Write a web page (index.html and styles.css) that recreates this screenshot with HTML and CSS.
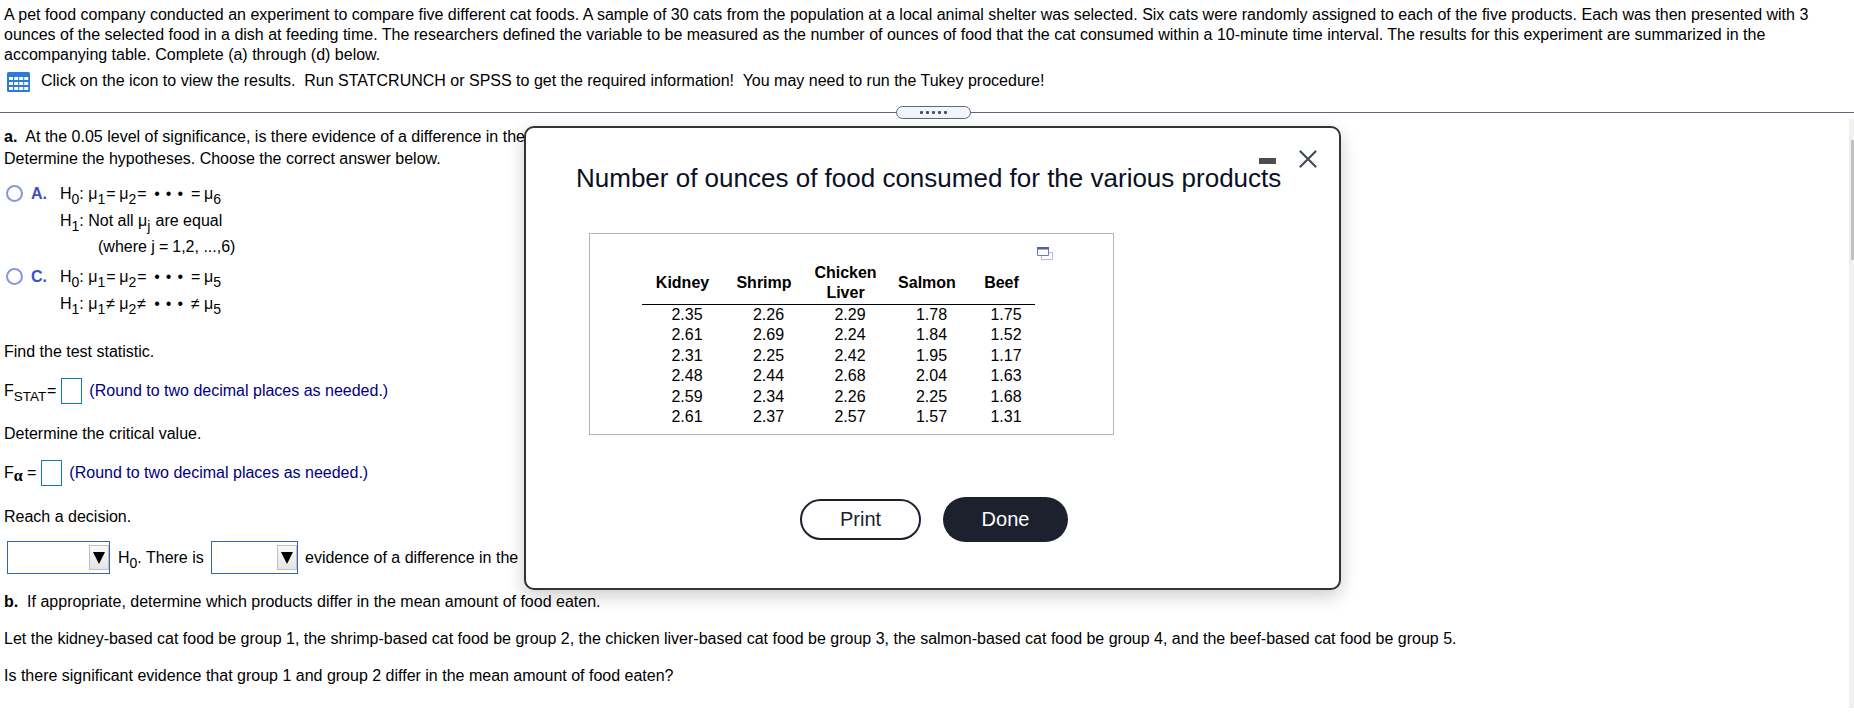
FILE: index.html
```html
<!DOCTYPE html>
<html lang="en">
<head>
  <meta charset="UTF-8">
  <title>Cat food experiment</title>
  <link rel="stylesheet" href="styles.css">
</head>
<body>
  <!-- Problem statement -->
  <div class="intro">
    <p><span class="l1">A pet food company conducted an experiment to compare five different cat foods. A sample of 30 cats from the population at a local animal shelter was selected. Six cats were randomly assigned to each of the five products. Each was then presented with 3</span><br>
    <span class="l2">ounces of the selected food in a dish at feeding time. The researchers defined the variable to be measured as the number of ounces of food that the cat consumed within a 10-minute time interval. The results for this experiment are summarized in the</span><br>
    <span class="l3">accompanying table. Complete (a) through (d) below.</span></p>
    <div class="data-link">
      <svg width="23" height="20" viewBox="0 0 23 20">
        <rect width="23" height="20" rx="1.5" fill="#2a7bd8"/>
        <g fill="#fff">
          <rect x="2" y="5" width="4" height="3"/><rect x="7.2" y="5" width="4" height="3"/><rect x="12.2" y="5" width="4" height="3"/><rect x="17.2" y="5" width="4" height="3"/>
          <rect x="2" y="10" width="4" height="3"/><rect x="7.2" y="10" width="4" height="3"/><rect x="12.2" y="10" width="4" height="3"/><rect x="17.2" y="10" width="4" height="3"/>
          <rect x="2" y="15" width="4" height="3"/><rect x="7.2" y="15" width="4" height="3"/><rect x="12.2" y="15" width="4" height="3"/><rect x="17.2" y="15" width="4" height="3"/>
        </g>
      </svg>
      <span class="l4">Click on the icon to view the results.&nbsp; Run STATCRUNCH or SPSS to get the required information!&nbsp; You may need to run the Tukey procedure!</span>
    </div>
  </div>

  <div class="splitter">
    <div class="handle"><i></i><i></i><i></i><i></i><i></i></div>
  </div>

  <!-- Question parts -->
  <div class="question">
    <p class="part-a"><span class="l5"><b>a.</b>&nbsp; At the 0.05 level of significance, is there evidence of a difference in the mean amount of food eaten among the various products?</span><br>
    <span class="l6">Determine the hypotheses. Choose the correct answer below.</span></p>

    <div class="choice">
      <span class="radio"></span><b class="letter">A.</b>
      <div class="math">
        <div>H<sub>0</sub>: <span class="mu">μ<sub>1</sub></span><span class="op">=</span><span class="mu">μ<sub>2</sub></span><span class="op">=</span><span class="dots">•••</span><span class="op">=</span><span class="mu">μ<sub>6</sub></span></div>
        <div>H<sub>1</sub>: <span class="not">Not all</span> <span class="mu muj">μ<sub>j</sub></span> are equal</div>
        <div class="where">(where j<span class="eq">=</span>1,2, ...,6)</div>
      </div>
    </div>
    <div class="choice choice-c">
      <span class="radio"></span><b class="letter">C.</b>
      <div class="math">
        <div>H<sub>0</sub>: <span class="mu">μ<sub>1</sub></span><span class="op">=</span><span class="mu">μ<sub>2</sub></span><span class="op">=</span><span class="dots">•••</span><span class="op">=</span><span class="mu">μ<sub>5</sub></span></div>
        <div>H<sub>1</sub>: <span class="mu">μ<sub>1</sub></span><span class="op ne">≠</span><span class="mu">μ<sub>2</sub></span><span class="op ne">≠</span><span class="dots">•••</span><span class="op ne">≠</span><span class="mu">μ<sub>5</sub></span></div>
      </div>
    </div>

    <p class="find">Find the test statistic.</p>
    <div class="answer">
      <span class="stat">F<sub>STAT</sub></span><span>=</span><span class="box"></span><span class="hint">(Round to two decimal places as needed.)</span>
    </div>
    <p class="critical">Determine the critical value.</p>
    <div class="answer">
      <span class="falpha">F<sub class="alpha">α</sub></span><span>=</span><span class="box"></span><span class="hint">(Round to two decimal places as needed.)</span>
    </div>
    <p class="reach">Reach a decision.</p>
    <div class="decision">
      <span class="select"><span class="arrow"></span></span>
      <span class="there">H<sub>0</sub>. There is</span>
      <span class="select select-small"><span class="arrow"></span></span>
      <span class="evidence">evidence of a difference in the</span>
    </div>
    <p class="part-b"><b>b.</b>&nbsp; If appropriate, determine which products differ in the mean amount of food eaten.</p>
    <p class="l7">Let the kidney-based cat food be group 1, the shrimp-based cat food be group 2, the chicken liver-based cat food be group 3, the salmon-based cat food be group 4, and the beef-based cat food be group 5.</p>
    <p class="l8">Is there significant evidence that group 1 and group 2 differ in the mean amount of food eaten?</p>
  </div>

  <div class="scrollbar"><div class="thumb"></div></div>

  <!-- Data popup -->
  <div class="modal">
    <div class="controls">
      <span class="minimize"></span>
      <svg width="18" height="18" viewBox="0 0 18 18"><path d="M1.5 1.5 16.5 16.5M16.5 1.5 1.5 16.5" stroke="#414b59" stroke-width="2.2" stroke-linecap="round"/></svg>
    </div>
    <h1>Number of ounces of food consumed for the various products</h1>
    <div class="data">
      <svg class="copy" width="16" height="13" viewBox="0 0 16 13">
        <path d="M4.5 5.5h11v7h-11z" fill="#fff" stroke="#b4bbe2"/>
        <path d="M.5 .5h11v8H.5z" fill="#fff" stroke="#6c7ac4"/>
        <path d="M0 0h12v2.5H0z" fill="#4f5fae"/>
      </svg>
      <table>
        <colgroup><col class="c1"><col class="c2"><col class="c3"><col class="c4"><col class="c5"></colgroup>
        <thead>
          <tr><th>Kidney</th><th>Shrimp</th><th>Chicken<br>Liver</th><th>Salmon</th><th>Beef</th></tr>
        </thead>
        <tbody>
          <tr><td>2.35</td><td>2.26</td><td>2.29</td><td>1.78</td><td>1.75</td></tr>
          <tr><td>2.61</td><td>2.69</td><td>2.24</td><td>1.84</td><td>1.52</td></tr>
          <tr><td>2.31</td><td>2.25</td><td>2.42</td><td>1.95</td><td>1.17</td></tr>
          <tr><td>2.48</td><td>2.44</td><td>2.68</td><td>2.04</td><td>1.63</td></tr>
          <tr><td>2.59</td><td>2.34</td><td>2.26</td><td>2.25</td><td>1.68</td></tr>
          <tr><td>2.61</td><td>2.37</td><td>2.57</td><td>1.57</td><td>1.31</td></tr>
        </tbody>
      </table>
    </div>
    <div class="buttons">
      <button class="print">Print</button>
      <button class="done">Done</button>
    </div>
  </div>
</body>
</html>
```
FILE: styles.css
```css
* {
  box-sizing: border-box;
}

body {
  margin: 0;
  height: 716px;
  overflow: hidden;
  position: relative;
  background: #fff;
  color: #000;
  font-family: "Liberation Sans", Arial, sans-serif;
  font-size: 16px;
  line-height: 20px;
  white-space: nowrap;
}

p {
  margin: 0;
}

.intro {
  height: 112px;
  padding: 5px 4px 0;
}

.data-link {
  display: flex;
  align-items: center;
  gap: 11px;
  margin: 5px 0 0 3px;
}

.data-link svg {
  margin-top: 2px;
}

.splitter {
  height: 1px;
  background: #5b6b7f;
  display: flex;
  align-items: center;
  padding-left: 896px;
}

.handle {
  flex: none;
  width: 75px;
  height: 13px;
  border: 1px solid #5b6b7f;
  border-radius: 7px;
  background: #f3f5f8;
  display: flex;
  align-items: center;
  justify-content: center;
  gap: 3px;
}

.handle i {
  width: 3px;
  height: 3px;
  border-radius: 1px;
  background: #4a4f57;
}

.question {
  padding: 13px 4px 0;
}

.part-a {
  line-height: 22px;
}

sub {
  font-size: 16px;
  line-height: 0;
  vertical-align: -5px;
}

.choice {
  display: flex;
  padding-left: 2px;
  margin-top: 11px;
  line-height: 26.5px;
  height: 81px;
}

.choice-c {
  margin-top: 2px;
  height: 54px;
}

.radio {
  width: 17px;
  height: 17px;
  margin-top: 4px;
  border: 2px solid #8796dc;
  border-radius: 50%;
}

.letter {
  width: 29px;
  margin-left: 8px;
  color: #3c50c8;
}

.math sub {
  font-size: 14px;
}

.mu {
  display: inline-block;
  width: 16px;
}

.muj {
  width: 13px;
}

.op {
  display: inline-block;
  width: 9px;
  margin: 0 4px 0 2px;
}

.dots {
  letter-spacing: 6px;
  margin: 0 0 0 4px;
}

.where {
  padding-left: 38px;
}

.eq {
  margin: 0 4px;
}

.find {
  margin-top: 24px;
}

.answer {
  display: flex;
  align-items: center;
  height: 26px;
  margin-top: 16px;
}

.stat {
  width: 43px;
}

.stat sub {
  font-size: 13.5px;
}

.falpha {
  width: 23px;
}

.falpha .alpha {
  font-family: "Liberation Serif", serif;
  font-weight: bold;
  font-size: 16px;
  vertical-align: -3px;
}

.box {
  width: 21px;
  height: 26px;
  margin: 0 7px 0 5px;
  border: 1px solid #0f7ea0;
}

.hint {
  color: #000080;
}

.critical {
  margin-top: 20px;
}

.reach {
  margin-top: 21px;
}

.decision {
  display: flex;
  align-items: center;
  height: 33px;
  margin: 14px 0 0 3px;
}

.select {
  display: flex;
  justify-content: flex-end;
  width: 103px;
  height: 33px;
  padding: 3px 0;
  border: 1px solid #2f63c4;
}

.select-small {
  width: 87px;
}

.arrow {
  display: flex;
  align-items: center;
  justify-content: center;
  width: 20px;
  border: 1px solid #c0c0c0;
  background: linear-gradient(#fafafa, #e4e4e4);
}

.arrow::before {
  content: "";
  border: 6px solid transparent;
  border-top: 12px solid #000;
  border-bottom: 0;
}

.there {
  width: 93px;
  margin-left: 8px;
}

.there sub {
  font-size: 14px;
}

.evidence {
  margin-left: 7px;
}

.part-b {
  margin-top: 18px;
}

.l7,
.l8 {
  margin-top: 17px;
}

.scrollbar {
  position: absolute;
  top: 119px;
  right: 0;
  width: 5px;
  height: 589px;
  padding: 21px 0 0 2px;
  background: #f0f0f0;
}

.thumb {
  height: 120px;
  background: #c1c1c1;
}

.modal {
  position: absolute;
  left: 524px;
  top: 126px;
  width: 817px;
  height: 464px;
  border: 2px solid #333;
  border-radius: 10px;
  background: #fff;
  box-shadow: 0 6px 18px rgba(0, 0, 0, 0.2);
}

.controls {
  position: absolute;
  top: 22px;
  right: 22px;
  display: flex;
  align-items: center;
  gap: 23px;
}

.minimize {
  width: 17px;
  height: 6px;
  margin-top: 4px;
  background: #4d4d4d;
}

h1 {
  margin: 34px 0 0 50px;
  font-size: 26px;
  line-height: 32px;
  font-weight: normal;
  color: #0a1026;
}

.data {
  position: relative;
  width: 525px;
  height: 202px;
  margin: 39px 0 0 63px;
  padding: 29px 0 0 52px;
  border: 1px solid #b5b5b5;
}

.copy {
  position: absolute;
  top: 13px;
  left: 447px;
}

table {
  width: 393px;
  table-layout: fixed;
  border-collapse: collapse;
}

.c1 { width: 81px; }
.c2 { width: 82px; }
.c3 { width: 81px; }
.c4 { width: 82px; }
.c5 { width: 67px; }

th {
  height: 41px;
  padding: 0;
  border-bottom: 1px solid #000;
}

td {
  height: 20.5px;
  padding: 0 0 0 9px;
  line-height: 20.5px;
  text-align: center;
}

.buttons {
  display: flex;
  align-items: center;
  gap: 22px;
  margin: 62px 0 0 274px;
}

button {
  font-family: inherit;
  font-size: 20px;
  padding: 0;
}

.print {
  width: 121px;
  height: 41px;
  border: 2px solid #1c212d;
  border-radius: 21px;
  background: #fff;
  color: #1c212d;
}

.done {
  width: 125px;
  height: 45px;
  border: 0;
  border-radius: 23px;
  background: #1c212d;
  color: #fff;
}
```
